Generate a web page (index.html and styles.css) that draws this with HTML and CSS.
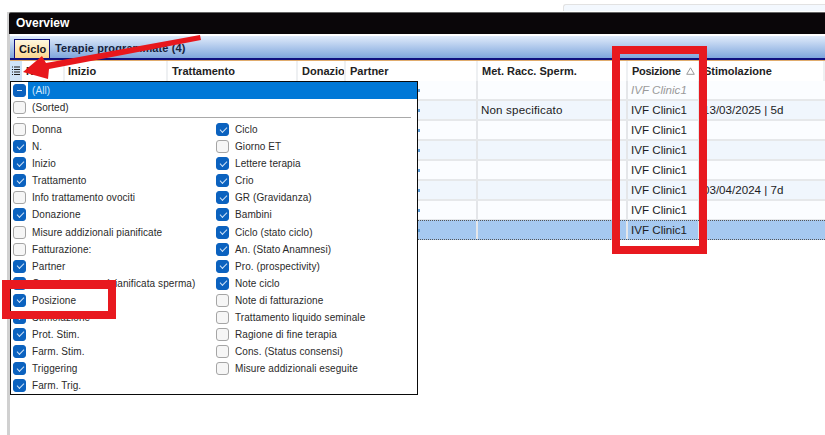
FILE: index.html
```html
<!DOCTYPE html>
<html lang="it">
<head>
<meta charset="utf-8">
<title>Overview</title>
<link rel="stylesheet" href="styles.css">
</head>
<body>
<div class="topstrip"><div class="topfield"></div></div>
<main class="window">
  <header class="title">Overview</header>
  <nav class="tabs">
    <span class="tab active">Ciclo</span>
    <span class="tab">Terapie programmate (4)</span>
  </nav>
  <section class="table">
    <div class="row head">
      <div class="cell c0"><svg class="listicon" width="8" height="10" viewBox="0 0 8 10"><path d="M0 1h1M0 3.500h1M0 6h1M0 8.500h1M2 1h6M2 3.500h6M2 6h6M2 8.500h6" stroke="#1a1a1a" stroke-width="1" fill="none"/></svg></div>
      <div class="cell c1">N.</div>
      <div class="cell c2">Inizio</div>
      <div class="cell c3">Trattamento</div>
      <div class="cell c4">Donazio</div>
      <div class="cell c5">Partner</div>
      <div class="cell c6">Met. Racc. Sperm.</div>
      <div class="cell c7"><span class="clip">Posizione</span><svg class="sort" width="9" height="8" viewBox="0 0 9 8"><path d="M4.500 .8L8.300 7.300H.7z" fill="none" stroke="#999"/></svg></div>
      <div class="cell c8">Stimolazione</div>
    </div>
    <div class="row odd"><div class="cell c0"></div><div class="cell c1"></div><div class="cell c2"></div><div class="cell c3"></div><div class="cell c4"></div><div class="cell c5"><i class="tick"></i></div><div class="cell c6"></div><div class="cell c7 ghost">IVF Clinic1</div><div class="cell c8"></div></div>
    <div class="row even"><div class="cell c0"></div><div class="cell c1"></div><div class="cell c2"></div><div class="cell c3"></div><div class="cell c4"></div><div class="cell c5"><i class="tick"></i></div><div class="cell c6">Non specificato</div><div class="cell c7">IVF Clinic1</div><div class="cell c8">13/03/2025 | 5d</div></div>
    <div class="row odd"><div class="cell c0"></div><div class="cell c1"></div><div class="cell c2"></div><div class="cell c3"></div><div class="cell c4"></div><div class="cell c5"><i class="tick"></i></div><div class="cell c6"></div><div class="cell c7">IVF Clinic1</div><div class="cell c8"></div></div>
    <div class="row even"><div class="cell c0"></div><div class="cell c1"></div><div class="cell c2"></div><div class="cell c3"></div><div class="cell c4"></div><div class="cell c5"><i class="tick"></i></div><div class="cell c6"></div><div class="cell c7">IVF Clinic1</div><div class="cell c8"></div></div>
    <div class="row odd"><div class="cell c0"></div><div class="cell c1"></div><div class="cell c2"></div><div class="cell c3"></div><div class="cell c4"></div><div class="cell c5"><i class="tick"></i></div><div class="cell c6"></div><div class="cell c7">IVF Clinic1</div><div class="cell c8"></div></div>
    <div class="row even"><div class="cell c0"></div><div class="cell c1"></div><div class="cell c2"></div><div class="cell c3"></div><div class="cell c4"></div><div class="cell c5"><i class="tick"></i></div><div class="cell c6"></div><div class="cell c7">IVF Clinic1</div><div class="cell c8">03/04/2024 | 7d</div></div>
    <div class="row odd last"><div class="cell c0"></div><div class="cell c1"></div><div class="cell c2"></div><div class="cell c3"></div><div class="cell c4"></div><div class="cell c5"><i class="tick"></i></div><div class="cell c6"></div><div class="cell c7">IVF Clinic1</div><div class="cell c8"></div></div>
    <div class="row selected"><div class="cell c0"></div><div class="cell c1"></div><div class="cell c2"></div><div class="cell c3"></div><div class="cell c4"></div><div class="cell c5"><i class="tick"></i></div><div class="cell c6"></div><div class="cell c7">IVF Clinic1</div><div class="cell c8"></div></div>
  </section>
</main>

<div class="menu">
  <div class="opt all"><span class="box on minus"></span><span class="allbar">(All)</span></div>
  <div class="opt sorted"><span class="box"></span><span class="lbl">(Sorted)</span></div>
  <hr class="sep">
  <div class="cols">
    <div class="col">
      <div class="opt"><span class="box"></span><span class="lbl">Donna</span></div>
      <div class="opt"><span class="box on"></span><span class="lbl">N.</span></div>
      <div class="opt"><span class="box on"></span><span class="lbl">Inizio</span></div>
      <div class="opt"><span class="box on"></span><span class="lbl">Trattamento</span></div>
      <div class="opt"><span class="box"></span><span class="lbl">Info trattamento ovociti</span></div>
      <div class="opt"><span class="box on"></span><span class="lbl">Donazione</span></div>
      <div class="opt"><span class="box"></span><span class="lbl">Misure addizionali pianificate</span></div>
      <div class="opt"><span class="box"></span><span class="lbl">Fatturazione:</span></div>
      <div class="opt"><span class="box on"></span><span class="lbl">Partner</span></div>
      <div class="opt"><span class="box on"></span><span class="lbl">Campione sem. (pianificata sperma)</span></div>
      <div class="opt"><span class="box on"></span><span class="lbl">Posizione</span></div>
      <div class="opt"><span class="box on"></span><span class="lbl">Stimolazione</span></div>
      <div class="opt"><span class="box on"></span><span class="lbl">Prot. Stim.</span></div>
      <div class="opt"><span class="box on"></span><span class="lbl">Farm. Stim.</span></div>
      <div class="opt"><span class="box on"></span><span class="lbl">Triggering</span></div>
      <div class="opt"><span class="box on"></span><span class="lbl">Farm. Trig.</span></div>
    </div>
    <div class="col">
      <div class="opt"><span class="box on"></span><span class="lbl">Ciclo</span></div>
      <div class="opt"><span class="box"></span><span class="lbl">Giorno ET</span></div>
      <div class="opt"><span class="box on"></span><span class="lbl">Lettere terapia</span></div>
      <div class="opt"><span class="box on"></span><span class="lbl">Crio</span></div>
      <div class="opt"><span class="box on"></span><span class="lbl">GR (Gravidanza)</span></div>
      <div class="opt"><span class="box on"></span><span class="lbl">Bambini</span></div>
      <div class="opt"><span class="box on"></span><span class="lbl">Ciclo (stato ciclo)</span></div>
      <div class="opt"><span class="box on"></span><span class="lbl">An. (Stato Anamnesi)</span></div>
      <div class="opt"><span class="box on"></span><span class="lbl">Pro. (prospectivity)</span></div>
      <div class="opt"><span class="box on"></span><span class="lbl">Note ciclo</span></div>
      <div class="opt"><span class="box"></span><span class="lbl">Note di fatturazione</span></div>
      <div class="opt"><span class="box"></span><span class="lbl">Trattamento liquido seminale</span></div>
      <div class="opt"><span class="box"></span><span class="lbl">Ragione di fine terapia</span></div>
      <div class="opt"><span class="box"></span><span class="lbl">Cons. (Status consensi)</span></div>
      <div class="opt"><span class="box"></span><span class="lbl">Misure addizionali eseguite</span></div>
    </div>
  </div>
</div>

<div class="mark mark-col"></div>
<div class="mark mark-pos"></div>
<svg class="arrow" width="185" height="55" viewBox="20 30 185 55"><path d="M200 35L46 63L42 56L23 72L48 79L49 69L201 40z" fill="#e8171c"/></svg>
</body>
</html>
```
FILE: styles.css
```css
* { box-sizing: border-box; }
html, body { margin: 0; padding: 0; }
body {
  position: relative;
  width: 825px;
  height: 435px;
  overflow: hidden;
  background: #fff;
  font-family: "Liberation Sans", Arial, sans-serif;
  font-size: 11.6px;
  color: #1c1c24;
}
.topstrip { height: 12px; padding: 4px 0 0 563px; }
.topfield { height: 7px; border: 1px solid #e2e2e2; border-bottom: 0; border-right: 0; border-radius: 3px 0 0 0; background: #f3f8fe; }
.window { margin-left: 7px; height: 423px; border-left: 3px solid #d0d0d0; }
.title {
  height: 22px;
  margin-left: -1px;
  background: #0a0609;
  border-top: 1px solid #666;
  border-radius: 2px 0 0 0;
  color: #fff;
  font-weight: bold;
  font-size: 12px;
  line-height: 21px;
  padding-left: 7px;
}
.tabs {
  height: 24px;
  margin-top: 2px;
  padding-left: 4px;
  display: flex;
  align-items: flex-end;
  background: linear-gradient(#e0ebfb, #7fa6dc);
  border-bottom: 2px solid #10107f;
  box-shadow: 0 1px 0 #e0ac6e;
}
.tab { font-weight: bold; font-size: 11px; letter-spacing: .1px; height: 19px; line-height: 18px; padding: 0 4px; color: #15223c; white-space: nowrap; }
.tab.active {
  background: linear-gradient(#fff8df, #fbd58e);
  border: 1px solid #10107f;
  border-bottom: 0;
  width: 36px;
  margin-right: 1px;
  color: #10101a;
}
.table { margin-top: 1px; }
.row { display: flex; height: 20px; }
.row.head { font-weight: bold; font-size: 11px; color: #222; background: #fff; }
.cell { height: 100%; padding-left: 3px; line-height: 18px; border-right: 2px solid #e4e6e9; white-space: nowrap; overflow: hidden; flex: none; }
.head .cell { line-height: 20px; padding-left: 4px; border-right: 2px solid #eef0f2; }
.c0 { width: 12px; padding: 0; border-right: 0; }
.head .c0 { background: #cfe4f8; display: flex; align-items: center; justify-content: center; padding: 0; border-right: 0; }
.c1 { width: 43px; }
.c2 { width: 103px; }
.c3 { width: 130px; }
.c4 { width: 48px; }
.c5 { width: 132px; }
.c6 { width: 150px; letter-spacing: .15px; }
.head .c6 { letter-spacing: 0; }
.c7 { width: 72px; }
.c8 { flex: 1; border-right: 0; }
.head .c2 { padding-left: 3px; }
.head .c7 { display: flex; align-items: center; }
.clip { width: 50px; flex: none; letter-spacing: -.3px; }
.odd { background: #fbfdff; border-bottom: 2px solid #e6e8ea; }
.even { background: #f0f6fd; border-bottom: 2px solid #e6e8ea; }
.last { height: 19px; border-bottom-width: 1px; }
.selected { background: #a6c9f0; border-top: 1px dotted #555; border-bottom: 1px dotted #555; }
.ghost { color: #9a9a9a; font-style: italic; }
.sort { margin-left: 4px; flex: none; }
.tick { display: block; width: 2px; height: 3px; margin: 8px 0 0 69px; background: #5d9cd8; }
.listicon { display: block; }
.menu {
  position: absolute;
  left: 10px;
  top: 81px;
  width: 408px;
  height: 314px;
  background: #fff;
  border: 1px solid #0a0a0a;
  padding: 0 0 0 2px;
  font-size: 10px;
  letter-spacing: .08px;
}
.opt { display: flex; align-items: center; height: 17.08px; color: #2a2a2a; }
.box {
  flex: none;
  width: 13px;
  height: 13px;
  border: 1px solid #a5a5a5;
  border-radius: 3px;
  background: #f6f6f6;
  position: relative;
}
.box.on { background: #0b62bf; border-color: #0b62bf; }
.box.on::after {
  content: "";
  position: absolute;
  left: 3px;
  top: 2.500px;
  width: 6px;
  height: 3px;
  border-left: 1px solid #cfe2f7;
  border-bottom: 1px solid #cfe2f7;
  transform: rotate(-45deg);
}
.box.minus::after { left: 3px; top: 5px; width: 5px; height: 1px; border: 0; background: #cfe2f7; transform: none; }
.lbl { margin-left: 6px; white-space: nowrap; }
.all { height: 17px; }
.allbar { margin-left: 2px; flex: 1; height: 17px; line-height: 17px; background: #0078d7; color: #d5e8fa; padding-left: 4px; }
.sorted { height: 17px; }
.sep { height: 1px; margin: 1px 6px 0 4px; border: 0; background: #a9a9a9; }
.cols { display: flex; margin-top: 3px; }
.col { flex: none; width: 203px; }
.mark { position: absolute; border: 8px solid #e8191f; }
.mark-col { left: 612px; top: 46px; width: 95px; height: 208px; }
.mark-pos { left: 2px; top: 280px; width: 114px; height: 39px; border-top-width: 9px; }
.arrow { position: absolute; left: 20px; top: 30px; }
```
